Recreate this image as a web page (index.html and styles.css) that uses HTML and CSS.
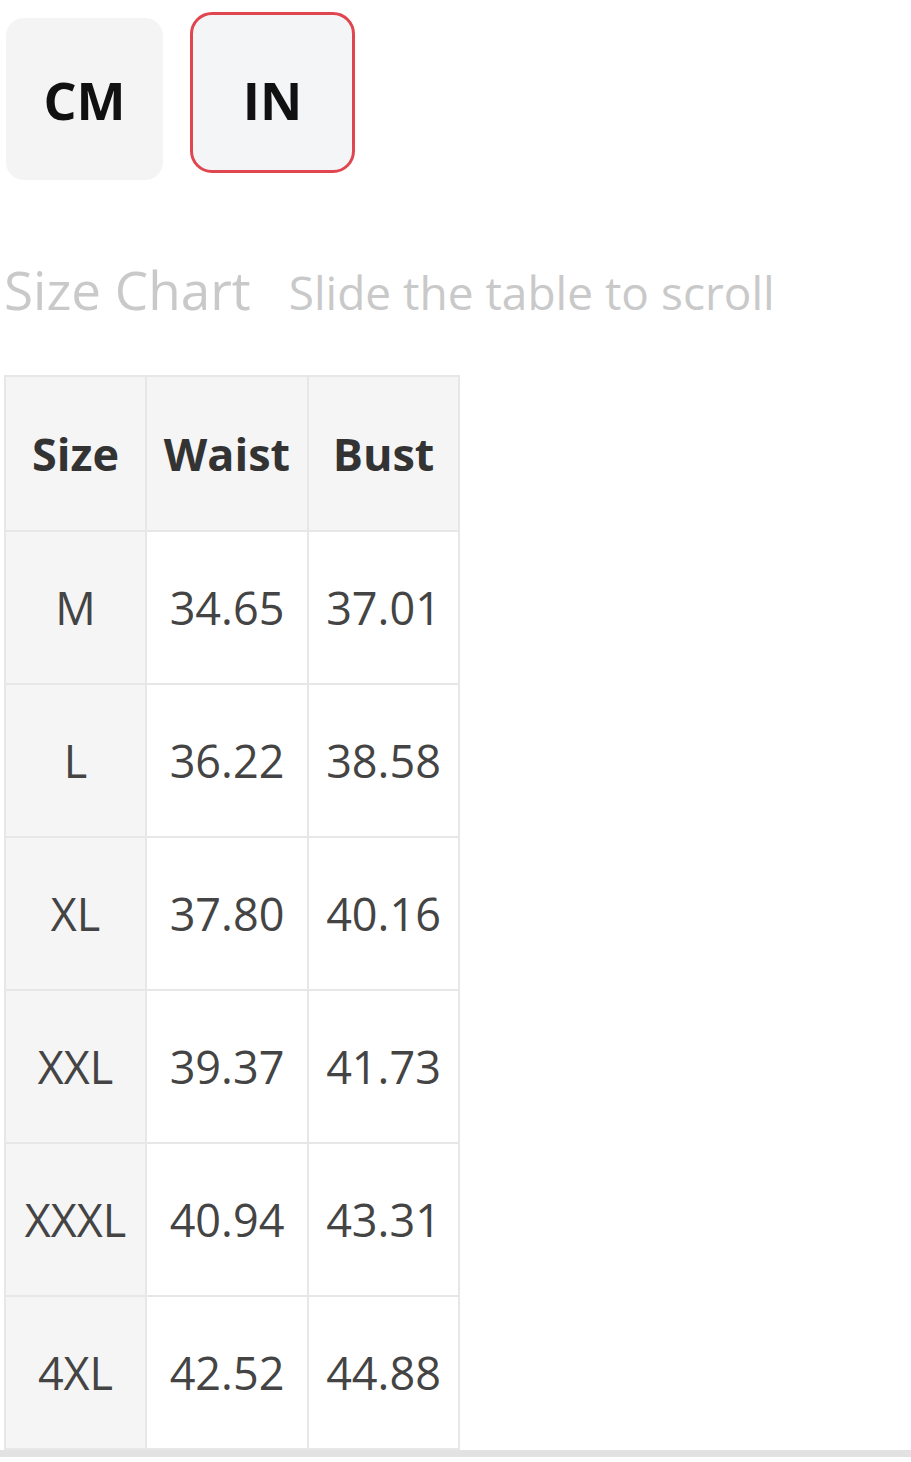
FILE: index.html
```html
<!DOCTYPE html>
<html lang="en">
<head>
<meta charset="utf-8">
<title>Size Chart</title>
<link rel="stylesheet" href="styles.css">
</head>
<body>
<div class="page">
  <div class="units">
    <button class="unit unit-cm">CM</button>
    <button class="unit unit-in">IN</button>
  </div>
  <div class="title-row">
    <span class="title">Size Chart</span>
    <span class="hint">Slide the table to scroll</span>
  </div>
  <div class="table-wrap">
    <table class="chart">
      <thead>
        <tr><th class="c1">Size</th><th class="c2">Waist</th><th class="c3">Bust</th></tr>
      </thead>
      <tbody>
        <tr><td class="size">M</td><td>34.65</td><td>37.01</td></tr>
        <tr><td class="size">L</td><td>36.22</td><td>38.58</td></tr>
        <tr><td class="size">XL</td><td>37.80</td><td>40.16</td></tr>
        <tr><td class="size">XXL</td><td>39.37</td><td>41.73</td></tr>
        <tr><td class="size">XXXL</td><td>40.94</td><td>43.31</td></tr>
        <tr><td class="size">4XL</td><td>42.52</td><td>44.88</td></tr>
      </tbody>
    </table>
    <div class="scrollbar"></div>
  </div>
</div>
</body>
</html>
```

FILE: styles.css
```css
* { box-sizing: border-box; }
html, body { margin: 0; padding: 0; background: #fff; }
body { font-family: "Open Sans", "Liberation Sans", sans-serif; }
.page { width: 911px; }

.units {
  display: flex;
  align-items: flex-start;
  gap: 27px;
  padding: 12px 0 0 6px;
}
.unit {
  font-family: "Open Sans", "Liberation Sans", sans-serif;
  font-weight: 700;
  font-size: 52px;
  color: #111;
  background: #f4f4f5;
  border: none;
  border-radius: 18px;
  padding: 0;
  display: flex;
  align-items: center;
  justify-content: center;
}
.unit-cm {
  width: 157px;
  height: 162px;
  margin-top: 6px;
}
.unit-in {
  width: 165px;
  height: 161px;
  padding-top: 14px;
  background: #f3f5f7;
  border: 3px solid #e0464f;
  border-radius: 22px;
}

.title-row {
  display: flex;
  align-items: baseline;
  gap: 38px;
  padding: 83px 0 0 4px;
}
.title {
  font-size: 53px;
  color: #c9c9c9;
  line-height: 1;
}
.hint {
  font-size: 46px;
  color: #c9c9c9;
  line-height: 1;
}

.table-wrap {
  margin-top: 59px;
}
.chart {
  margin-left: 4px;
  border-collapse: collapse;
  font-size: 45px;
  color: #444;
}
.chart th, .chart td {
  border: 2px solid #e7e7e7;
  text-align: center;
  vertical-align: middle;
  padding: 0;
}
.chart th {
  height: 155px;
  background: #f5f5f5;
  font-weight: 700;
  color: #333;
}
.chart td {
  height: 153px;
  background: #fff;
}
.chart td.size { background: #f5f5f5; }
.c1 { width: 141px; }
.c2 { width: 162px; }
.c3 { width: 151px; }

.scrollbar {
  height: 7px;
  background: #e2e2e2;
  width: 911px;
}
```
